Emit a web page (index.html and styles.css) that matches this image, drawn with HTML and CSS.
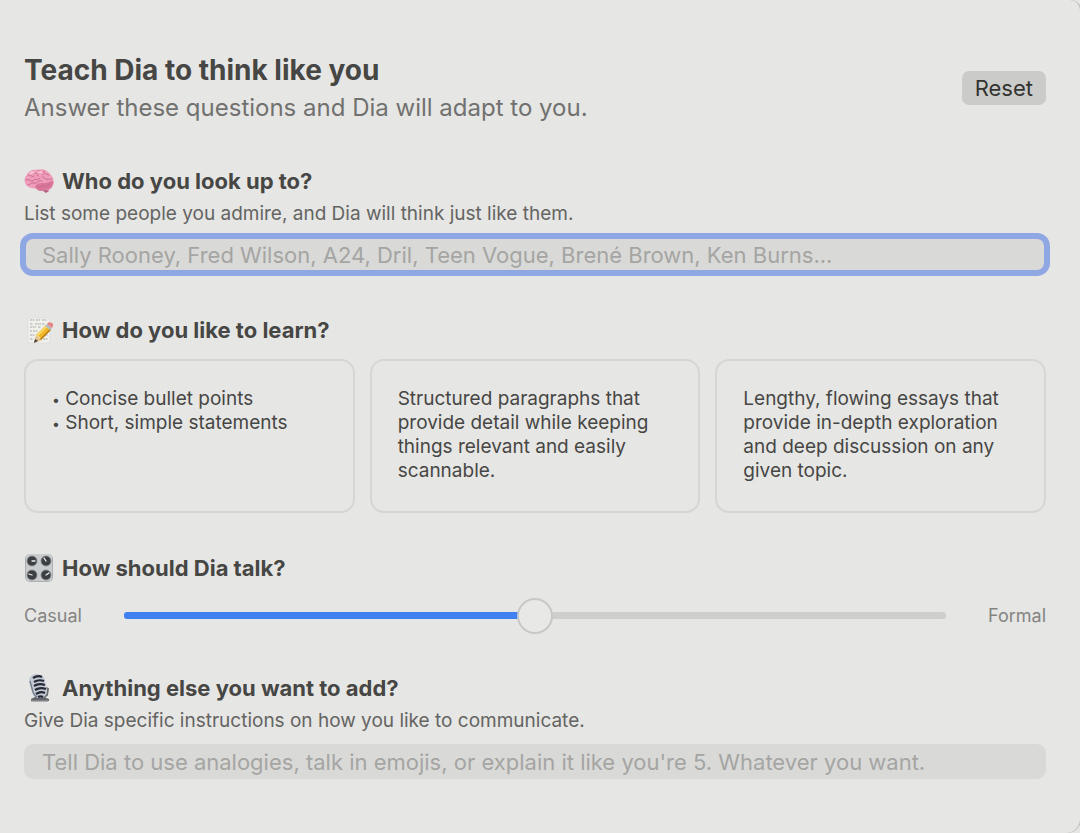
FILE: index.html
```html
<!DOCTYPE html>
<html lang="en">
<head>
    <meta charset="UTF-8">
    <meta name="viewport" content="width=device-width, initial-scale=1.0">
    <title>Teach Dia to think like you</title>
    <link rel="stylesheet" href="styles.css">
</head>
<body>
    <main class="panel">
        <header class="header">
            <div>
                <h1 class="title">Teach Dia to think like you</h1>
                <p class="subtitle">Answer these questions and Dia will adapt to you.</p>
            </div>
            <button class="reset-btn" type="button">Reset</button>
        </header>

        <section class="question">
            <h2 class="question-title">
                <!-- brain -->
                <svg class="icon" viewBox="0 0 30 30" aria-hidden="true">
                    <path d="M17 22l5-1 3 4-3 2-3-2z" fill="#b5627f"/>
                    <path d="M2 19C0 16 0 11 3 9c1-4 6-6 11-5 5-2 10 1 12 4 3 2 5 8 3 11-1 4-4 6-8 5-3 2-6 1-8-2-4 1-8 0-11-3z" fill="#ee9dba"/>
                    <path d="M11 21c1-4 6-4 9-4 4 0 6-2 9-2 1 5-3 9-8 9-4 2-8 1-10-3z" fill="#d87799"/>
                    <path d="M4 9c3-1 3 3 6 1M9 5c0 3 5 1 5 5M14 4c3 1 1 4 5 4M20 5c-2 2 2 3 5 4M2 14c4-2 4 3 8 0 2-2 4 1 6-2M19 10c-1 3 3 2 4 4M4 19c3 0 2-3 6-2 4 1 4-4 8-2M23 13c2 0 3 1 5 0M13 21c3 1 4-2 7-1s4-2 6-2" fill="none" stroke="#cb6b8e" stroke-width="1" stroke-linecap="round"/>
                    <path d="M6 8c1-2 3-2 4-2M15 6c1 0 2 0 3 1" fill="none" stroke="#ffd0df" stroke-width="1.3" stroke-linecap="round"/>
                </svg>
                <label for="people">Who do you look up to?</label>
            </h2>
            <p class="hint" id="people-hint">List some people you admire, and Dia will think just like them.</p>
            <input class="field" id="people" type="text" aria-describedby="people-hint" placeholder="Sally Rooney, Fred Wilson, A24, Dril, Teen Vogue, Brené Brown, Ken Burns..." autofocus>
        </section>

        <section class="question">
            <h2 class="question-title">
                <!-- memo and pencil -->
                <svg class="icon" viewBox="0 0 30 30" aria-hidden="true">
                    <path d="M4 3h22v25H4z" fill="#f0f0ec" stroke="#dadad6" stroke-width=".6"/>
                    <path d="M6 5h5m1 0h4m2 0h5M6 9h3m2 0h6m1 0h3M6 12h6m2 0h3M6 16h2m1 0h5M6 20h5M6 24h3m12-4h3m-5 4h5" stroke="#a9a9a7" stroke-width="1" stroke-dasharray="2 .5"/>
                    <path d="M10 28l2-8 6 5z" fill="#e5c28a"/>
                    <path d="M10 28l1-4 3 2z" fill="#414141"/>
                    <path d="M12 20L22 10l5 4-10 11c0-2-2-4-5-5z" fill="#efb927"/>
                    <path d="M13 20l10-10 1 1-10 10z" fill="#ffe17a"/>
                    <path d="M16 24l10-10 1 1-10 10z" fill="#b77910"/>
                    <path d="M21 11l2-2 5 4-2 2z" fill="#b5bdc4"/>
                    <path d="M23 9c1-2 3-2 5-1s1 3 0 5z" fill="#e98283"/>
                </svg>
                How do you like to learn?
            </h2>
            <div class="cards">
                <button class="card" type="button"><span><span class="bullet">•</span> Concise bullet points<br><span class="bullet">•</span> Short, simple statements</span></button>
                <button class="card" type="button">Structured paragraphs that provide detail while keeping things relevant and easily scannable.</button>
                <button class="card" type="button">Lengthy, flowing essays that provide in-depth exploration and deep discussion on any given topic.</button>
            </div>
        </section>

        <section class="question">
            <h2 class="question-title">
                <!-- control knobs -->
                <svg class="icon" viewBox="0 0 30 30" aria-hidden="true">
                    <rect x="1" y="1" width="28" height="28" rx="5" fill="#adb0b2"/>
                    <rect x="2" y="1" width="26" height="27" rx="4" fill="#c9ccce"/>
                    <g fill="#3c3f41" stroke="#85898b" stroke-width=".8">
                        <circle cx="8" cy="8" r="5"/>
                        <circle cx="22" cy="8" r="5"/>
                        <circle cx="8" cy="22" r="5"/>
                        <circle cx="22" cy="22" r="5"/>
                    </g>
                    <path d="M8 8h3M22 8l-2-3M8 22l-3-1M22 22l3-2" stroke="#f1f1f1" stroke-width="1.3" stroke-linecap="round"/>
                </svg>
                <label for="tone">How should Dia talk?</label>
            </h2>
            <div class="slider-row">
                <span>Casual</span>
                <input class="slider" id="tone" type="range" min="0" max="100" value="50">
                <span>Formal</span>
            </div>
        </section>

        <section class="question">
            <h2 class="question-title">
                <!-- studio microphone -->
                <svg class="icon" viewBox="0 0 30 30" aria-hidden="true">
                    <path d="M7 26l4-2h9l5 2v2H7z" fill="#63666a"/>
                    <path d="M7 28h17" stroke="#929598" stroke-width="1.4"/>
                    <path d="M21 14l3 2-1 6-4 3" fill="none" stroke="#6c7075" stroke-width="2"/>
                    <path d="M5 8c0-4 3-7 7-7 5 0 8 2 9 6l2 10c0 5-3 8-7 8-4 0-7-2-8-6z" fill="#c3cad6"/>
                    <path d="M9 5c3-2 7-2 9-1M10 9c3-2 7-2 10-1M10 13c3-2 8-2 11-1M11 17c3-2 8-2 11-1M12 21c3-2 7-2 9-1M14 24c2-1 3-1 5 0" fill="none" stroke="#252a34" stroke-width="2.2"/>
                    <path d="M6 8l3 11c1 3 2 4 4 5" fill="none" stroke="#767f8d" stroke-width="1.4"/>
                </svg>
                <label for="extra">Anything else you want to add?</label>
            </h2>
            <p class="hint" id="extra-hint">Give Dia specific instructions on how you like to communicate.</p>
            <input class="field" id="extra" type="text" aria-describedby="extra-hint" placeholder="Tell Dia to use analogies, talk in emojis, or explain it like you're 5. Whatever you want.">
        </section>
    </main>
</body>
</html>
```
FILE: styles.css
```css
* {
    box-sizing: border-box;
}

body {
    margin: 0;
    min-height: 100vh;
    background: #e6e6e4;
    color: #464644;
    font-family: Inter, "Liberation Sans", sans-serif;
}

h1, h2, p {
    margin: 0;
}

button, input {
    font-family: inherit;
}

.panel {
    min-height: 100vh;
    padding: 52px 34px 48px 24px;
    border-radius: 0 10px 14px 0;
    box-shadow: 1px 0 0 #b9b9b7;
}

.header {
    display: flex;
    justify-content: space-between;
    align-items: flex-start;
}

.title {
    font-size: 28px;
    line-height: 36px;
    font-weight: 700;
}

.subtitle {
    padding-top: 2px;
    font-size: 24px;
    line-height: 36px;
    color: #71716f;
}

.reset-btn {
    height: 34px;
    margin-top: 19px;
    padding: 0 13px;
    border: none;
    border-radius: 7px;
    background: #cbcbc9;
    color: #333331;
    font-size: 22px;
    line-height: 32px;
}

.question {
    margin-top: 41px;
}

.question-title {
    display: flex;
    align-items: center;
    gap: 8px;
    font-size: 22px;
    line-height: 28px;
    font-weight: 700;
}

.icon {
    width: 30px;
    height: 30px;
    margin: -1px 0;
}

.hint {
    margin: 7px 0 11px;
    font-size: 19px;
    line-height: 24px;
    color: #646462;
}

.field {
    display: block;
    width: 100%;
    height: 35px;
    margin-bottom: 44px;
    padding: 0 18px;
    border: none;
    border-radius: 9px;
    background: #d9d9d7;
    color: #464644;
    caret-color: transparent;
    font-size: 22px;
}

.field::placeholder {
    color: #a5a5a3;
}

.field:focus {
    outline: 6px solid #8fa7e3;
    outline-offset: -2px;
}

.question:last-child .field {
    margin-bottom: 0;
}

.cards {
    display: grid;
    grid-template-columns: repeat(3, 1fr);
    gap: 15px;
    margin-top: 15px;
}

.card {
    display: flex;
    min-height: 154px;
    padding: 26px;
    border: 2px solid #d6d6d4;
    border-radius: 14px;
    background: none;
    color: #464644;
    font-size: 19px;
    line-height: 24px;
    text-align: left;
}

.bullet {
    font-size: 14px;
    line-height: 14px;
}

.slider-row {
    display: flex;
    align-items: center;
    gap: 42px;
    margin-top: 15px;
    color: #848482;
    font-size: 18px;
}

.slider {
    flex: 1;
    min-width: 0;
    height: 36px;
    margin: 0;
    background: none;
    -webkit-appearance: none;
    appearance: none;
}

.slider::-webkit-slider-runnable-track {
    height: 7px;
    border-radius: 3px;
    background: linear-gradient(to right, #4080f0 50%, #cececc 50%);
}

.slider::-webkit-slider-thumb {
    width: 36px;
    height: 36px;
    margin-top: -14px;
    border: 2px solid #c8c8c6;
    border-radius: 50%;
    background: #e8e8e6;
    -webkit-appearance: none;
    appearance: none;
}
```
